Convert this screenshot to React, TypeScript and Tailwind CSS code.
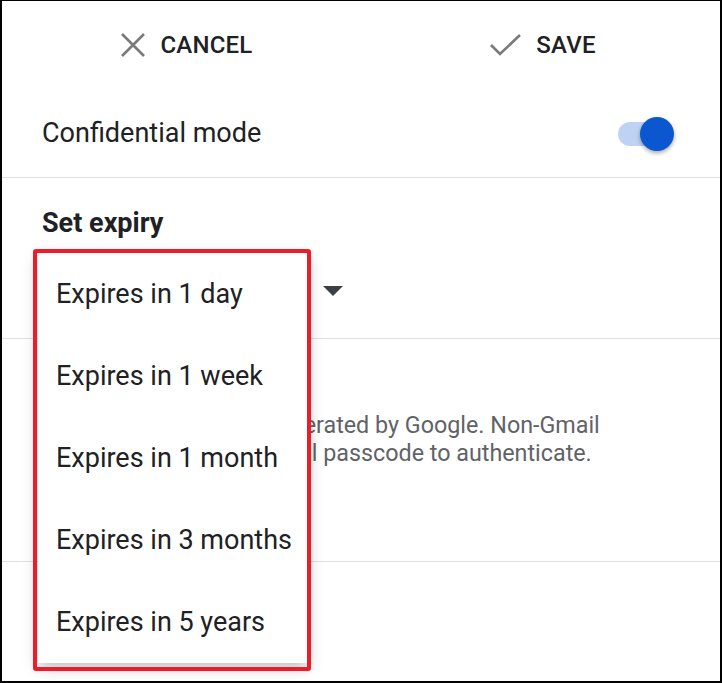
import React from "react";

const options = [
  "Expires in 1 day",
  "Expires in 1 week",
  "Expires in 1 month",
  "Expires in 3 months",
  "Expires in 5 years",
];

function CloseIcon() {
  return (
    <svg width="26" height="24" viewBox="0 0 26 24" className="shrink-0">
      <path d="M2 1 L24 23 M24 1 L2 23" stroke="#7a7a7a" strokeWidth="2.6" fill="none" />
    </svg>
  );
}

function CheckIcon() {
  return (
    <svg width="32" height="22" viewBox="0 0 32 22" className="shrink-0">
      <path d="M1 11 L10 20 L30 1" stroke="#7a7a7a" strokeWidth="2.6" fill="none" />
    </svg>
  );
}

export default function App() {
  return (
    <div className="relative h-[683px] w-[722px] overflow-hidden border-t border-r-2 border-b-2 border-l-2 border-black bg-white font-['Roboto',sans-serif] text-[#202124]">
      {/* Action bar */}
      <div className="flex h-[87px] items-center">
        <button className="flex flex-1 items-center justify-center gap-[15px] pl-[7px] text-[24px] font-medium tracking-[0.2px] text-[#202124]">
          <CloseIcon />
          CANCEL
        </button>
        <button className="flex flex-1 items-center justify-center gap-[14px] pl-[3px] text-[24px] font-medium tracking-[0.2px] text-[#202124]">
          <CheckIcon />
          SAVE
        </button>
      </div>

      {/* Confidential mode */}
      <div className="flex h-[90px] items-center justify-between border-b border-[#e0e0e0] pr-[46px] pl-[40px]">
        <span className="pt-[2px] text-[27px]">Confidential mode</span>
        <div className="relative mt-[2px] h-[34px] w-[56px]">
          <div className="absolute top-[5px] left-0 h-[24px] w-[42px] rounded-full bg-[#bed3f3]" />
          <div className="absolute top-0 right-0 h-[34px] w-[34px] rounded-full bg-[#0b57d0] shadow-[0_2px_4px_rgba(0,0,0,0.35)]" />
        </div>
      </div>

      {/* Set expiry */}
      <div className="h-[161px] border-b border-[#e0e0e0] px-[40px] pt-[29px]">
        <div className="text-[27px] leading-[32px] font-bold">Set expiry</div>
        <div className="mt-[39px] flex items-center">
          <span className="w-[281px] text-[27px] leading-[32px]">Expires in 1 day</span>
          <svg width="20" height="10" viewBox="0 0 20 10" className="mt-[-6px]">
            <path d="M0 0 L20 0 L10 10 Z" fill="#3c4043" />
          </svg>
        </div>
      </div>

      {/* Passcode */}
      <div className="h-[223px] border-b border-[#e0e0e0] px-[41px] pt-[72px]">
        <p className="text-[23.3px] leading-[28px] text-[#5f6368]">
          All passcodes will be generated by Google. Non-Gmail
          <br />
          recipients will get an email passcode to authenticate.
        </p>
      </div>

      {/* Dropdown menu */}
      <div className="absolute top-[252px] left-[36px] w-[270px] bg-white shadow-[0_4px_14px_rgba(0,0,0,0.28)]">
        {options.map((o) => (
          <div key={o} className="flex h-[82px] items-center pl-[18px] text-[27px]">
            {o}
          </div>
        ))}
      </div>

      {/* Highlight */}
      <div className="pointer-events-none absolute top-[248px] left-[31px] h-[422px] w-[278px] rounded-[3px] border-4 border-[#ec1c2b]" />
    </div>
  );
}
